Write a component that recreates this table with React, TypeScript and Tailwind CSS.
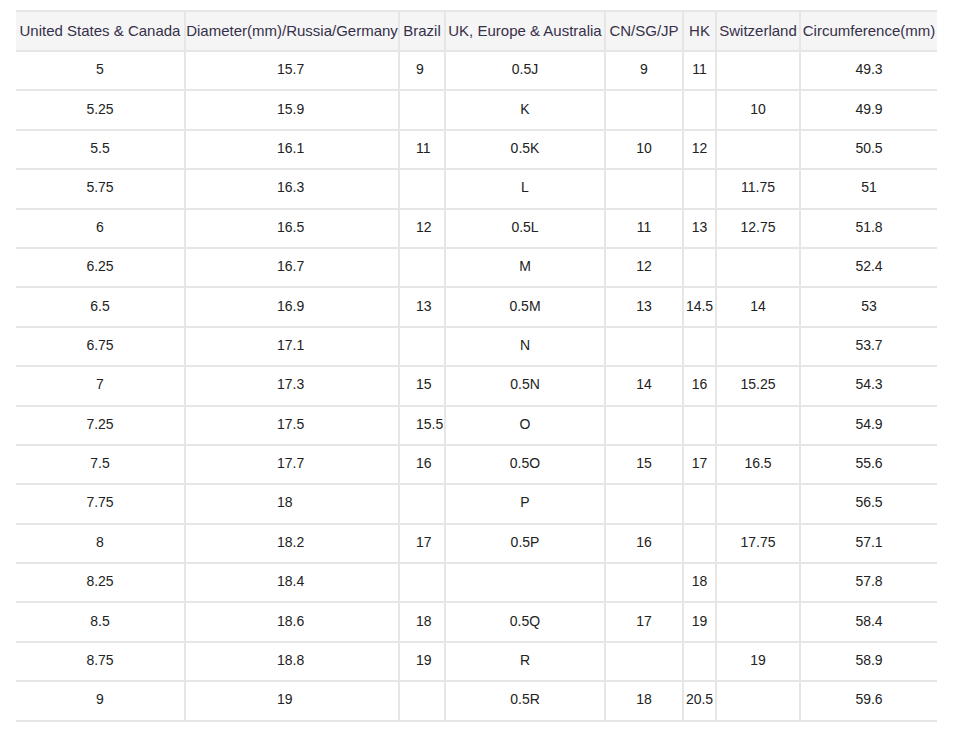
const headers = [
  "United States & Canada",
  "Diameter(mm)/Russia/Germany",
  "Brazil",
  "UK, Europe & Australia",
  "CN/SG/JP",
  "HK",
  "Switzerland",
  "Circumference(mm)",
];

const widths = [169, 214, 46, 160, 78, 33, 84, 137];

// per-column cell classes (alignment matches the chart)
const cellCls = [
  "text-center",
  "text-left pl-[91px]",
  "text-left pl-[16px]",
  "text-center",
  "text-center",
  "text-center",
  "text-center",
  "text-center",
];

const rows: string[][] = [
  ["5", "15.7", "9", "0.5J", "9", "11", "", "49.3"],
  ["5.25", "15.9", "", "K", "", "", "10", "49.9"],
  ["5.5", "16.1", "11", "0.5K", "10", "12", "", "50.5"],
  ["5.75", "16.3", "", "L", "", "", "11.75", "51"],
  ["6", "16.5", "12", "0.5L", "11", "13", "12.75", "51.8"],
  ["6.25", "16.7", "", "M", "12", "", "", "52.4"],
  ["6.5", "16.9", "13", "0.5M", "13", "14.5", "14", "53"],
  ["6.75", "17.1", "", "N", "", "", "", "53.7"],
  ["7", "17.3", "15", "0.5N", "14", "16", "15.25", "54.3"],
  ["7.25", "17.5", "15.5", "O", "", "", "", "54.9"],
  ["7.5", "17.7", "16", "0.5O", "15", "17", "16.5", "55.6"],
  ["7.75", "18", "", "P", "", "", "", "56.5"],
  ["8", "18.2", "17", "0.5P", "16", "", "17.75", "57.1"],
  ["8.25", "18.4", "", "", "", "18", "", "57.8"],
  ["8.5", "18.6", "18", "0.5Q", "17", "19", "", "58.4"],
  ["8.75", "18.8", "19", "R", "", "", "19", "58.9"],
  ["9", "19", "", "0.5R", "18", "20.5", "", "59.6"],
];

export default function App() {
  return (
    <div className="w-[960px] h-[732px] bg-white pt-[10px] pl-[16px] font-['Liberation_Sans',Arial,sans-serif] text-[#222]">
      <table className="table-fixed border-collapse w-[921px]">
        <colgroup>
          {widths.map((w, i) => (
            <col key={i} style={{ width: w }} />
          ))}
        </colgroup>
        <thead>
          <tr className="h-[40px] bg-[#f5f5f5] border-y-2 border-[#e6e6e6]">
            {headers.map((h, i) => (
              <th
                key={i}
                className={`p-0 font-normal text-[15px] whitespace-nowrap text-center text-[#36304a] ${
                  i > 0 ? "border-l-2 border-[#e6e6e6]" : ""
                }`}
              >
                {h}
              </th>
            ))}
          </tr>
        </thead>
        <tbody>
          {rows.map((r, ri) => (
            <tr key={ri} className="h-[39.4px] border-b-2 border-[#e6e6e6]">
              {r.map((v, ci) => (
                <td
                  key={ci}
                  className={`p-0 pb-[2px] whitespace-nowrap text-[14px] ${cellCls[ci]} ${
                    ci > 0 ? "border-l-2 border-[#e6e6e6]" : ""
                  }`}
                >
                  {v}
                </td>
              ))}
            </tr>
          ))}
        </tbody>
      </table>
    </div>
  );
}
